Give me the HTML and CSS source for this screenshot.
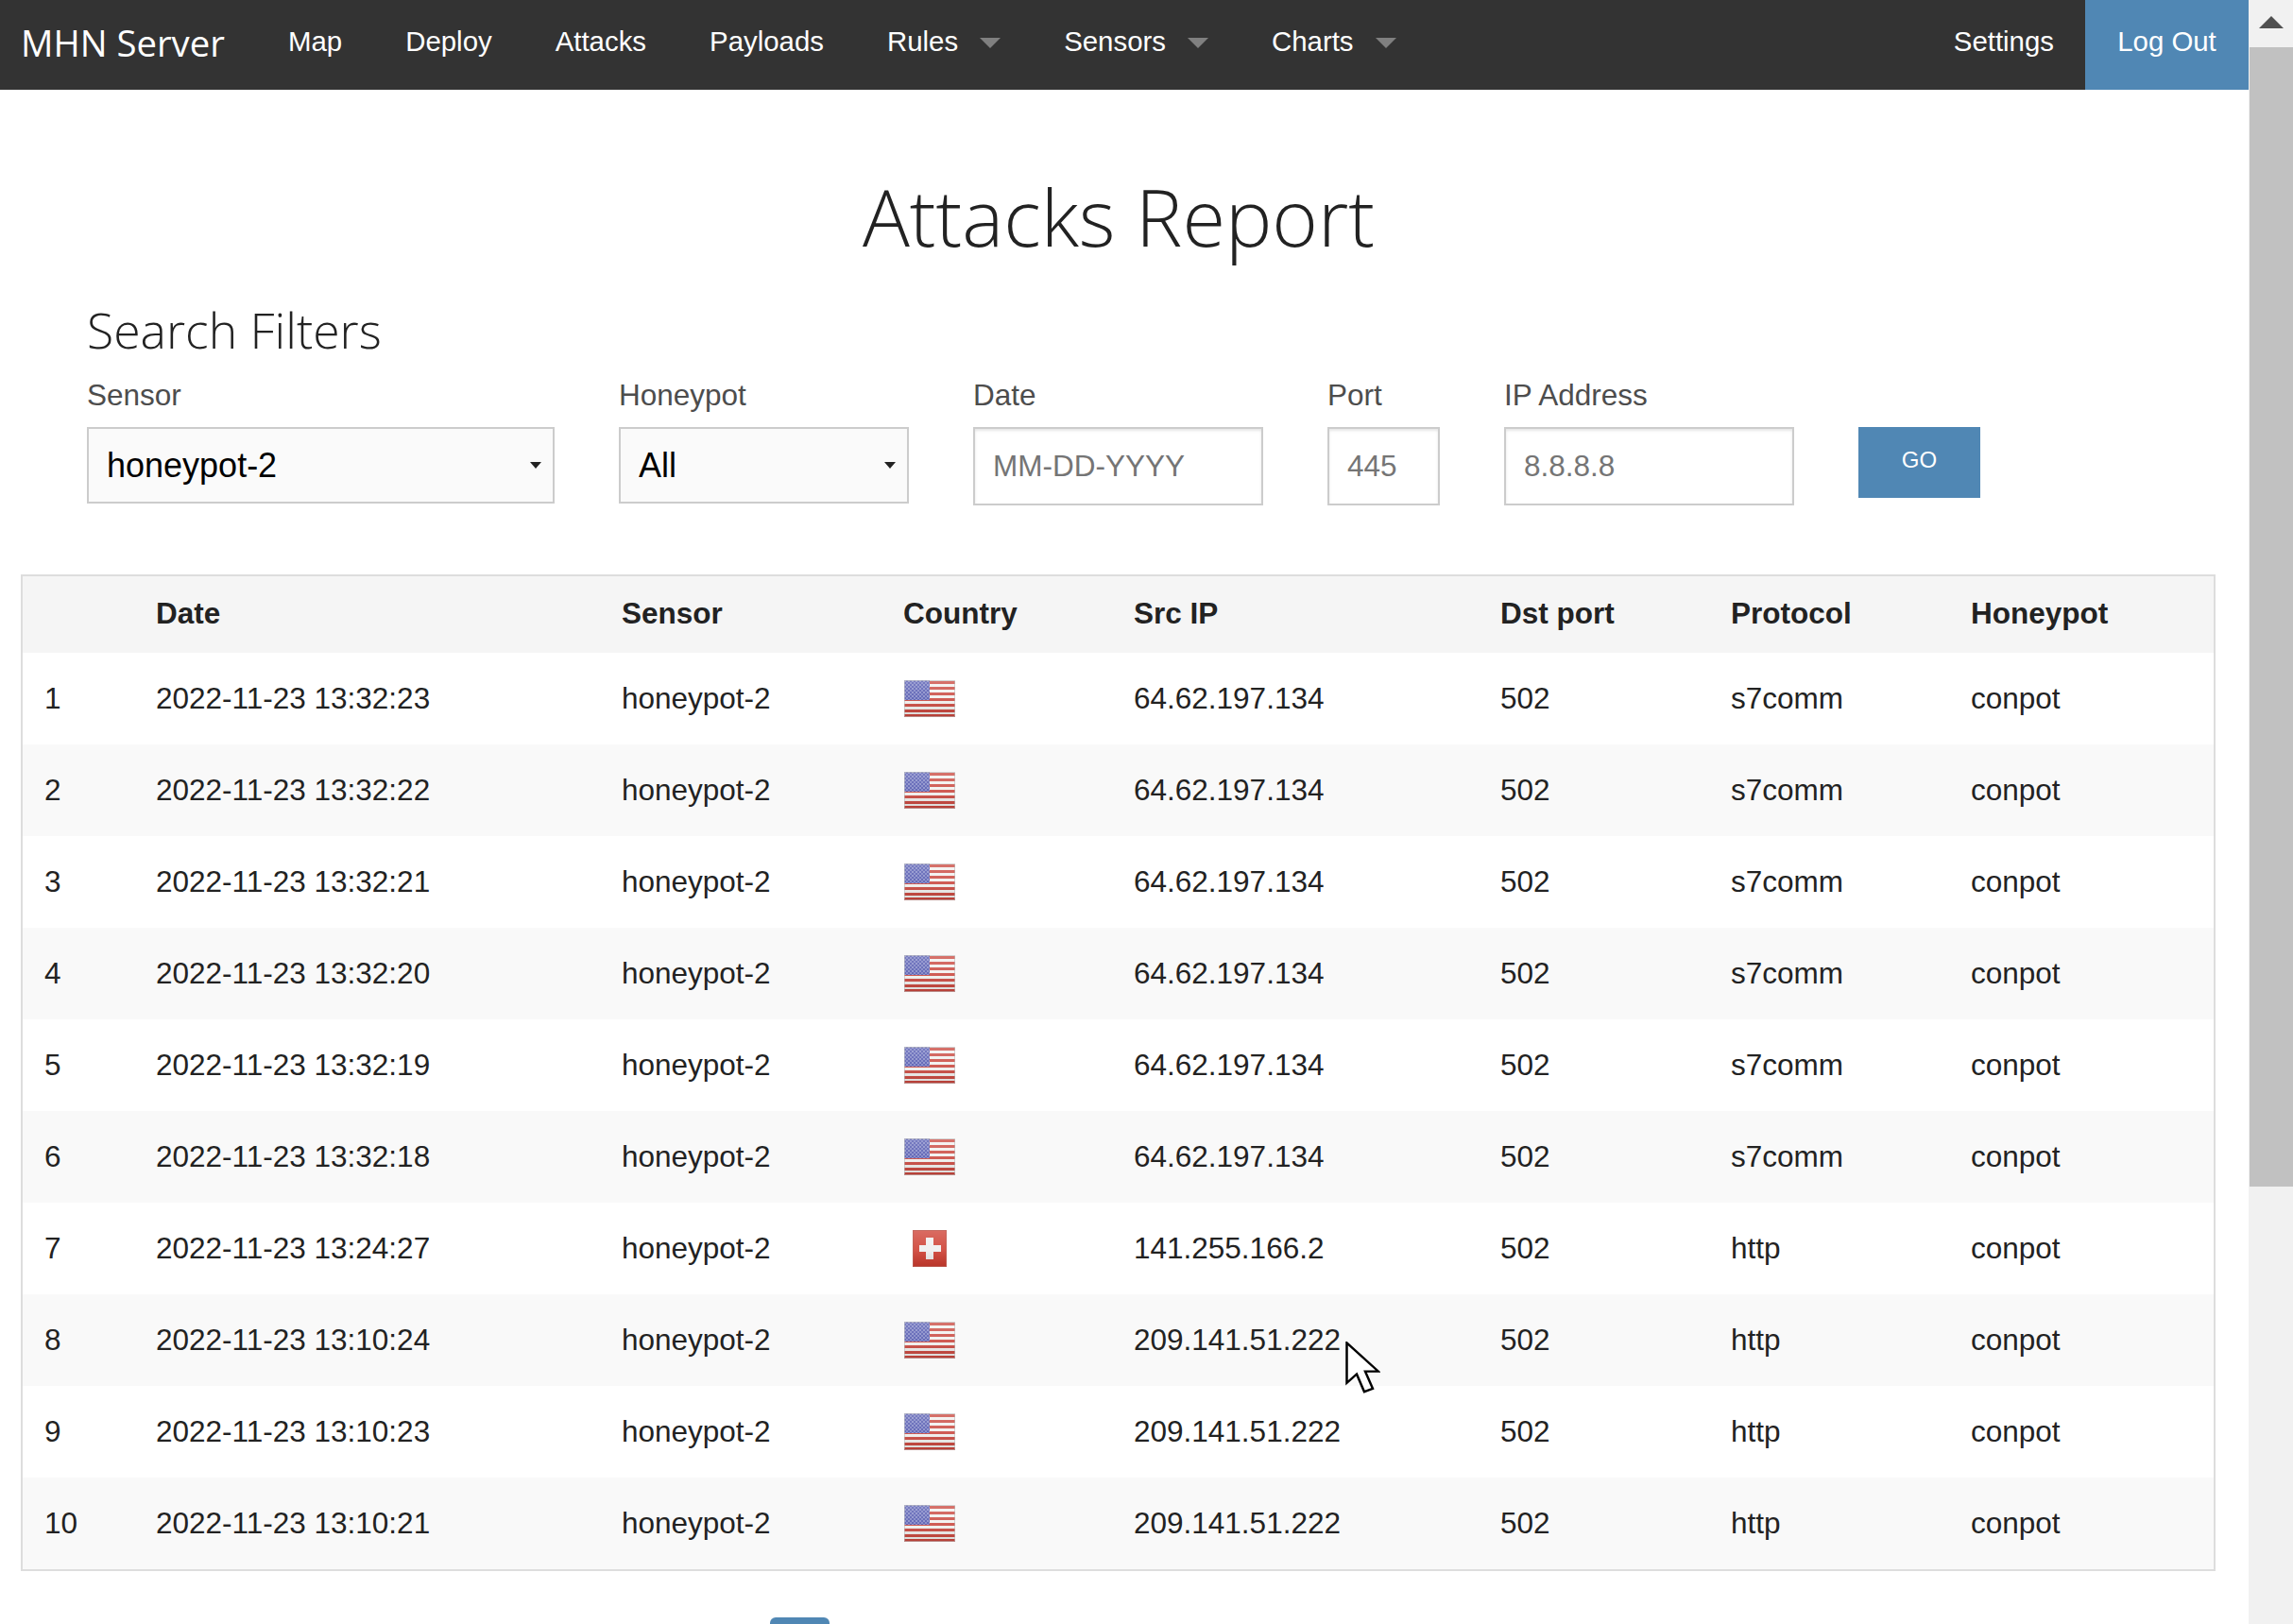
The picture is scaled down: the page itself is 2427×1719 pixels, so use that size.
FILE: index.html
```html
<!DOCTYPE html>
<html lang="en">
<head>
    <meta charset="UTF-8">
    <title>Attacks Report</title>
    <link rel="stylesheet" href="styles.css">
</head>
<body>
    <svg class="defs" width="0" height="0">
        <defs>
            <pattern id="stars" width="4" height="4" patternUnits="userSpaceOnUse">
                <circle cx="1" cy="1" r="0.7" fill="#e4e6f4"/>
                <circle cx="3" cy="3" r="0.7" fill="#c9cdea"/>
            </pattern>
            <linearGradient id="gloss" x1="0" y1="0" x2="0" y2="1">
                <stop offset="0" stop-color="#fff" stop-opacity="0.25"/>
                <stop offset="0.55" stop-color="#fff" stop-opacity="0.12"/>
                <stop offset="1" stop-color="#000" stop-opacity="0.1"/>
            </linearGradient>
            <symbol id="flag-us" viewBox="0 0 54 39">
                <rect width="54" height="39" fill="#f1f0ee"/>
                <path d="M0 1h54v3H0zM0 7h54v3H0zM0 13h54v3H0zM0 19h54v3H0zM0 25h54v3H0zM0 31h54v3H0zM0 36h54v3H0z" fill="#c9453c"/>
                <rect width="27" height="21" fill="#4d53ad"/>
                <rect width="27" height="21" fill="url(#stars)"/>
                <rect width="54" height="39" fill="url(#gloss)"/>
                <rect x="0.5" y="0.5" width="53" height="38" fill="none" stroke="#bbb" stroke-opacity="0.6"/>
            </symbol>
            <symbol id="flag-ch" viewBox="0 0 36 39">
                <rect width="36" height="39" fill="#cd3b2e"/>
                <path d="M14 8h8v8h8v7h-8v8h-8v-8H7v-7h7z" fill="#efefef"/>
                <rect width="36" height="39" fill="url(#gloss)"/>
                <rect x="0.5" y="0.5" width="35" height="38" fill="none" stroke="#b9685f" stroke-opacity="0.6"/>
            </symbol>
        </defs>
    </svg>

    <div class="page">
        <nav class="topbar">
            <a class="brand" href="#">MHN Server</a>
            <ul class="nav-left">
                <li><a href="#">Map</a></li>
                <li><a href="#">Deploy</a></li>
                <li><a href="#">Attacks</a></li>
                <li><a href="#">Payloads</a></li>
                <li><a class="has-dropdown" href="#">Rules</a></li>
                <li><a class="has-dropdown" href="#">Sensors</a></li>
                <li><a class="has-dropdown" href="#">Charts</a></li>
            </ul>
            <ul class="nav-right">
                <li><a href="#">Settings</a></li>
                <li><a class="logout" href="#">Log Out</a></li>
            </ul>
        </nav>

        <main class="content">
            <h1 class="page-title">Attacks Report</h1>

            <form class="filters">
                <h2 class="filters-title">Search Filters</h2>
                <div class="filter-row">
                    <label class="field field-sensor">
                        <span class="field-label">Sensor</span>
                        <span class="select-wrap"><select class="select"><option>honeypot-2</option></select></span>
                    </label>
                    <label class="field field-honeypot">
                        <span class="field-label">Honeypot</span>
                        <span class="select-wrap"><select class="select"><option>All</option></select></span>
                    </label>
                    <label class="field field-date">
                        <span class="field-label">Date</span>
                        <input class="text-input" type="text" placeholder="MM-DD-YYYY">
                    </label>
                    <label class="field field-port">
                        <span class="field-label">Port</span>
                        <input class="text-input" type="text" placeholder="445">
                    </label>
                    <label class="field field-ip">
                        <span class="field-label">IP Address</span>
                        <input class="text-input" type="text" placeholder="8.8.8.8">
                    </label>
                    <button class="go-btn" type="button">GO</button>
                </div>
            </form>

            <table class="report">
                <thead>
                    <tr>
                        <th class="col-num"></th>
                        <th class="col-date">Date</th>
                        <th class="col-sensor">Sensor</th>
                        <th class="col-country">Country</th>
                        <th class="col-ip">Src IP</th>
                        <th class="col-port">Dst port</th>
                        <th class="col-proto">Protocol</th>
                        <th>Honeypot</th>
                    </tr>
                </thead>
                <tbody>
                    <tr><td>1</td><td>2022-11-23 13:32:23</td><td>honeypot-2</td><td><svg class="flag"><use href="#flag-us"/></svg></td><td>64.62.197.134</td><td>502</td><td>s7comm</td><td>conpot</td></tr>
                    <tr><td>2</td><td>2022-11-23 13:32:22</td><td>honeypot-2</td><td><svg class="flag"><use href="#flag-us"/></svg></td><td>64.62.197.134</td><td>502</td><td>s7comm</td><td>conpot</td></tr>
                    <tr><td>3</td><td>2022-11-23 13:32:21</td><td>honeypot-2</td><td><svg class="flag"><use href="#flag-us"/></svg></td><td>64.62.197.134</td><td>502</td><td>s7comm</td><td>conpot</td></tr>
                    <tr><td>4</td><td>2022-11-23 13:32:20</td><td>honeypot-2</td><td><svg class="flag"><use href="#flag-us"/></svg></td><td>64.62.197.134</td><td>502</td><td>s7comm</td><td>conpot</td></tr>
                    <tr><td>5</td><td>2022-11-23 13:32:19</td><td>honeypot-2</td><td><svg class="flag"><use href="#flag-us"/></svg></td><td>64.62.197.134</td><td>502</td><td>s7comm</td><td>conpot</td></tr>
                    <tr><td>6</td><td>2022-11-23 13:32:18</td><td>honeypot-2</td><td><svg class="flag"><use href="#flag-us"/></svg></td><td>64.62.197.134</td><td>502</td><td>s7comm</td><td>conpot</td></tr>
                    <tr><td>7</td><td>2022-11-23 13:24:27</td><td>honeypot-2</td><td><svg class="flag flag-square"><use href="#flag-ch"/></svg></td><td>141.255.166.2</td><td>502</td><td>http</td><td>conpot</td></tr>
                    <tr><td>8</td><td>2022-11-23 13:10:24</td><td>honeypot-2</td><td><svg class="flag"><use href="#flag-us"/></svg></td><td>209.141.51.222</td><td>502</td><td>http</td><td>conpot</td></tr>
                    <tr><td>9</td><td>2022-11-23 13:10:23</td><td>honeypot-2</td><td><svg class="flag"><use href="#flag-us"/></svg></td><td>209.141.51.222</td><td>502</td><td>http</td><td>conpot</td></tr>
                    <tr><td>10</td><td>2022-11-23 13:10:21</td><td>honeypot-2</td><td><svg class="flag"><use href="#flag-us"/></svg></td><td>209.141.51.222</td><td>502</td><td>http</td><td>conpot</td></tr>
                </tbody>
            </table>

            <div class="pagination"><a class="page-current" href="#"></a></div>
        </main>
    </div>

    <div class="scrollbar">
        <div class="scroll-arrow"></div>
        <div class="scroll-thumb"></div>
    </div>

    <svg class="mouse-cursor" viewBox="0 0 37 59" preserveAspectRatio="none">
        <path d="M1.5 1.500V47l10.500-10 8 20 9-3.500-8-19.500H35z" fill="#fff" stroke="#000" stroke-width="2.500"/>
    </svg>
</body>
</html>
```

FILE: styles.css
```css
* {
    box-sizing: border-box;
    margin: 0;
    padding: 0;
}

html, body {
    height: 100%;
    overflow: hidden;
}

body {
    display: flex;
    position: relative;
    background: #fff;
    color: #222;
    font-family: "Liberation Sans", Arial, sans-serif;
    font-size: 31.500px;
}

.defs {
    position: absolute;
}

.page {
    flex: 1;
    min-width: 0;
}

/* top bar */
.topbar {
    display: flex;
    align-items: stretch;
    height: 95px;
    background: #333;
}

.topbar ul {
    display: flex;
    list-style: none;
}

.topbar a {
    display: flex;
    align-items: center;
    height: 100%;
    color: #fff;
    text-decoration: none;
    font-size: 29.400px;
    padding-bottom: 7px;
}

.topbar .brand {
    width: 305px;
    padding-left: 22px;
    font-family: "Open Sans", sans-serif;
    font-size: 38.300px;
    padding-bottom: 6px;
}

.nav-left li {
    padding-right: 67px;
}

.nav-right {
    margin-left: auto;
}

.nav-right li:first-child {
    padding-right: 33px;
}

.has-dropdown::after {
    content: "";
    margin-left: 23px;
    margin-top: 2px;
    border-style: solid;
    border-width: 11px 11.500px 0;
    border-color: #808080 transparent transparent;
}

.topbar .logout {
    width: 173px;
    justify-content: center;
    background: #5087b4;
}

/* heading + filters */
.page-title {
    margin-top: 77px;
    padding-right: 12px;
    text-align: center;
    font-family: "Open Sans", sans-serif;
    font-weight: 300;
    font-size: 83px;
    line-height: 114px;
    color: #222;
}

.filters {
    padding: 0 0 0 92px;
    margin-top: 28px;
}

.filters-title {
    font-family: "Open Sans", sans-serif;
    font-weight: 300;
    font-size: 51.700px;
    line-height: 70px;
    color: #222;
}

.filter-row {
    display: flex;
    align-items: flex-start;
    gap: 68px;
    margin-top: 15px;
}

.field {
    display: block;
}

.field-label {
    display: block;
    height: 53px;
    line-height: 38px;
    color: #4d4d4d;
}

.field-sensor { width: 495px; }
.field-honeypot { width: 307px; }
.field-date { width: 307px; }
.field-port { width: 119px; }
.field-ip { width: 307px; }

.select-wrap {
    display: block;
    position: relative;
}

.select-wrap::after {
    content: "";
    position: absolute;
    right: 14px;
    top: 37px;
    border-style: solid;
    border-width: 7px 6px 0;
    border-color: #222 transparent transparent;
}

.select {
    display: block;
    width: 100%;
    height: 81px;
    padding-left: 19px;
    appearance: none;
    background: #fafafa;
    border: 2px solid #ccc;
    border-radius: 0;
    color: #000;
    font-family: inherit;
    font-size: 36px;
}

.text-input {
    display: block;
    width: 100%;
    height: 83px;
    padding-left: 19px;
    background: #fff;
    border: 2px solid #ccc;
    box-shadow: inset 0 2px 3px rgba(0, 0, 0, 0.1);
    font-family: inherit;
    font-size: 31.500px;
}

.text-input::placeholder {
    color: #757575;
    opacity: 1;
}

.go-btn {
    width: 129px;
    height: 75px;
    margin-top: 53px;
    padding-bottom: 6px;
    background: #5087b4;
    border: none;
    color: #fff;
    font-family: inherit;
    font-size: 24px;
}

/* table */
.report {
    width: 2323px;
    margin: 73px 0 0 22px;
    border: 2px solid #ddd;
    border-collapse: separate;
    border-spacing: 0;
    table-layout: fixed;
}

.report th {
    height: 81px;
    padding: 0 0 2px;
    text-align: left;
    font-weight: 700;
    background: #f5f5f5;
    color: #222;
}

.report td {
    height: 97px;
    padding: 0;
    color: #222;
}

.report tbody tr:nth-child(even) td {
    background: #f9f9f9;
}

.report th:first-child,
.report td:first-child {
    padding-left: 23px;
}

.col-num { width: 141px; }
.col-date { width: 493px; }
.col-sensor { width: 298px; }
.col-country { width: 244px; }
.col-ip { width: 388px; }
.col-port { width: 244px; }
.col-proto { width: 254px; }

.flag {
    display: block;
    width: 54px;
    height: 39px;
    margin-left: 1px;
}

.flag-square {
    width: 36px;
    margin-left: 10px;
}

/* only the top of the active page button fits on screen */
.pagination {
    display: flex;
    margin: 49px 0 0 815px;
}

.page-current {
    display: block;
    width: 63px;
    height: 48px;
    background: #5087b4;
    border-radius: 6px;
}

/* browser chrome */
.scrollbar {
    width: 47px;
    flex: none;
    background: #f1f1f1;
}

.scroll-arrow {
    height: 50px;
    display: flex;
    justify-content: center;
    padding-top: 17px;
}

.scroll-arrow::before {
    content: "";
    height: 0;
    border-style: solid;
    border-width: 0 13px 13px;
    border-color: transparent transparent #505050;
}

.scroll-thumb {
    height: 1206px;
    margin-left: 1px;
    background: #c1c1c1;
}

.mouse-cursor {
    position: absolute;
    left: 1424px;
    top: 1420px;
    width: 37px;
    height: 55px;
}
```
